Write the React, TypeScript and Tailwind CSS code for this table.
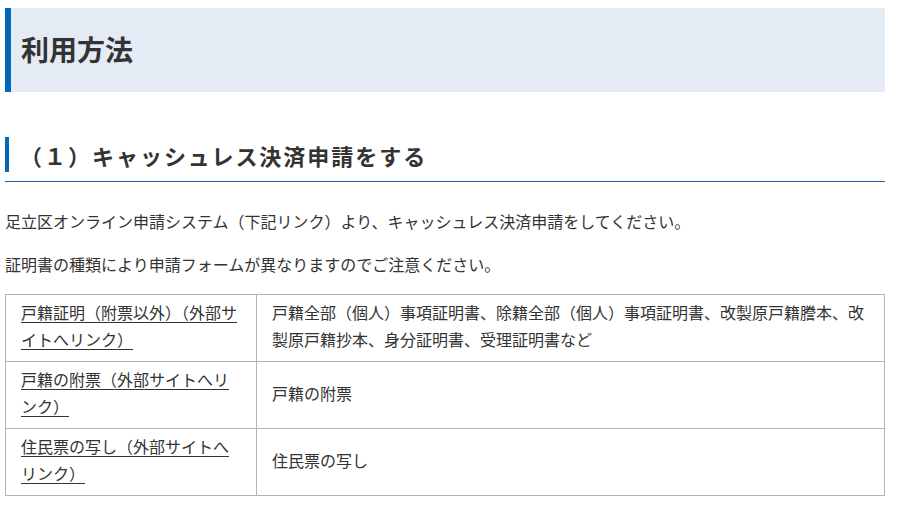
export default function App() {
  const rows = [
    {
      link: '戸籍証明（附票以外）（外部サイトへリンク）',
      desc: '戸籍全部（個人）事項証明書、除籍全部（個人）事項証明書、改製原戸籍謄本、改製原戸籍抄本、身分証明書、受理証明書など',
      h: 'h-[67px]',
    },
    { link: '戸籍の附票（外部サイトへリンク）', desc: '戸籍の附票', h: 'h-[66px]' },
    { link: '住民票の写し（外部サイトへリンク）', desc: '住民票の写し', h: 'h-[67px]' },
  ];

  return (
    <div
      className="w-[899px] h-[526px] overflow-hidden bg-white text-[#333]"
      style={{ fontFamily: '"Noto Sans CJK JP", "Noto Sans", sans-serif' }}
    >
      <div className="pl-[5px] pr-[14px] pt-2">
        <h2 className="h-[84px] flex items-center border-l-[6px] border-[#0068b7] bg-[#e4ebf5] pl-[10px] pb-[3px] text-[28px] font-bold leading-none">
          利用方法
        </h2>

        <div className="mt-[45px] border-b border-[#1d5fa8] pb-[9px]">
          <h3 className="h-[35px] flex items-center border-l-4 border-[#0068b7] pl-[11px] text-[22px] font-bold tracking-[0.09em] leading-none">
            （１）キャッシュレス決済申請をする
          </h3>
        </div>

        <p className="mt-[26px] text-[16px] leading-[27px]">
          足立区オンライン申請システム（下記リンク）より、キャッシュレス決済申請をしてください。
        </p>
        <p className="mt-[16px] text-[16px] leading-[27px]">
          証明書の種類により申請フォームが異なりますのでご注意ください。
        </p>

        <table className="mt-[16px] w-full border-collapse text-[16px] leading-[27px]">
          <tbody>
            {rows.map((r, i) => (
              <tr key={i} className={r.h}>
                <td className="w-[251px] border border-[#b3b3b3] px-[15px] pt-[4px] pb-[8px] align-middle">
                  <a href="#" className="underline underline-offset-[3px] decoration-[#333]">
                    {r.link}
                  </a>
                </td>
                <td className="border border-[#b3b3b3] px-[15px] pt-[4px] pb-[8px] align-middle">{r.desc}</td>
              </tr>
            ))}
          </tbody>
        </table>
      </div>
    </div>
  );
}
